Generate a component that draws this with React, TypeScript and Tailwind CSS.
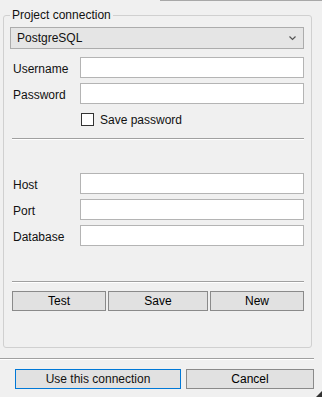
import React, { useState } from 'react';

const labelCls = 'w-[70px] pl-[3px] pt-[3px] leading-[16px]';
const inputCls = 'flex-1 h-[21px] bg-white border border-[#b4b4b4] outline-none px-1 text-[12px]';
const btnCls = 'h-[20px] bg-[#e1e1e1] border border-[#8a8a8a] text-[12px] leading-[16px] text-black';

const Sep = ({ className }: { className?: string }) => (
  <div className={'h-[2px] border-t border-[#a0a0a0] border-b border-b-white ' + (className ?? '')} />
);

const App: React.FC = () => {
  const [savePass, setSavePass] = useState(false);

  return (
    <div
      className="relative w-[322px] h-[397px] bg-[#f0f0f0] text-[12px] text-[#111] overflow-hidden flex flex-col"
      style={{ fontFamily: '"Liberation Sans", Arial, sans-serif' }}
    >
      <div className="h-px ml-[160px] bg-[#a8a8a8]" />

      <fieldset className="mt-[6px] ml-[3px] w-[309px] border border-[#d0d0d0] rounded-[3px] pl-[6px] pr-[7px] pb-[36px]">
        <legend className="px-[2px] leading-[16px]">Project connection</legend>

        <div className="mt-[4px] h-[22px] flex items-center justify-between bg-[#e5e5e5] border border-[#acacac] pl-[6px] pr-[7px]">
          <span className="leading-[16px]">PostgreSQL</span>
          <svg width="7" height="5" viewBox="0 0 7 5" className="mt-[1px]">
            <path d="M0.5 0.5 L3.5 3.5 L6.5 0.5" fill="none" stroke="#555" strokeWidth="1.2" />
          </svg>
        </div>

        <div className="mt-[8px] flex items-center">
          <span className={labelCls}>Username</span>
          <input className={inputCls} />
        </div>
        <div className="mt-[5px] flex items-center">
          <span className={labelCls}>Password</span>
          <input type="password" className={inputCls} />
        </div>

        <label className="mt-[9px] ml-[71px] flex items-center h-[13px] cursor-default">
          <span
            onClick={() => setSavePass(!savePass)}
            className="w-[13px] h-[13px] bg-white border border-[#333] flex items-center justify-center"
          >
            {savePass && (
              <svg width="9" height="9" viewBox="0 0 9 9">
                <path d="M1 4.5 L3.5 7 L8 1.5" fill="none" stroke="#222" strokeWidth="1.3" />
              </svg>
            )}
          </span>
          <span className="ml-[6px] leading-[16px]">Save password</span>
        </label>

        <Sep className="mt-[12px] ml-[2px]" />

        <div className="mt-[33px] flex items-center">
          <span className={labelCls}>Host</span>
          <input className={inputCls} />
        </div>
        <div className="mt-[5px] flex items-center">
          <span className={labelCls}>Port</span>
          <input className={inputCls} />
        </div>
        <div className="mt-[5px] flex items-center">
          <span className={labelCls}>Database</span>
          <input className={inputCls} />
        </div>

        <Sep className="mt-[35px] ml-[2px]" />

        <div className="mt-[8px] ml-[2px] flex gap-[2px]">
          <button className={btnCls + ' w-[94px]'}>Test</button>
          <button className={btnCls + ' w-[100px]'}>Save</button>
          <button className={btnCls + ' w-[94px]'}>New</button>
        </div>
      </fieldset>

      <Sep className="mt-[10px] w-[314px]" />

      <div className="mt-[9px] ml-[15px] flex gap-[5px]">
        <button className="w-[166px] h-[20px] bg-[#e1e1e1] border border-[#0078d7] leading-[16px]">
          Use this connection
        </button>
        <button className={btnCls + ' w-[128px]'}>Cancel</button>
      </div>

      {/* resize grip */}
      <svg width="6" height="6" viewBox="0 0 6 6" className="absolute right-0 bottom-0">
        <polygon points="6,0 6,6 0,6" fill="#333" />
      </svg>
    </div>
  );
};

export default App;
